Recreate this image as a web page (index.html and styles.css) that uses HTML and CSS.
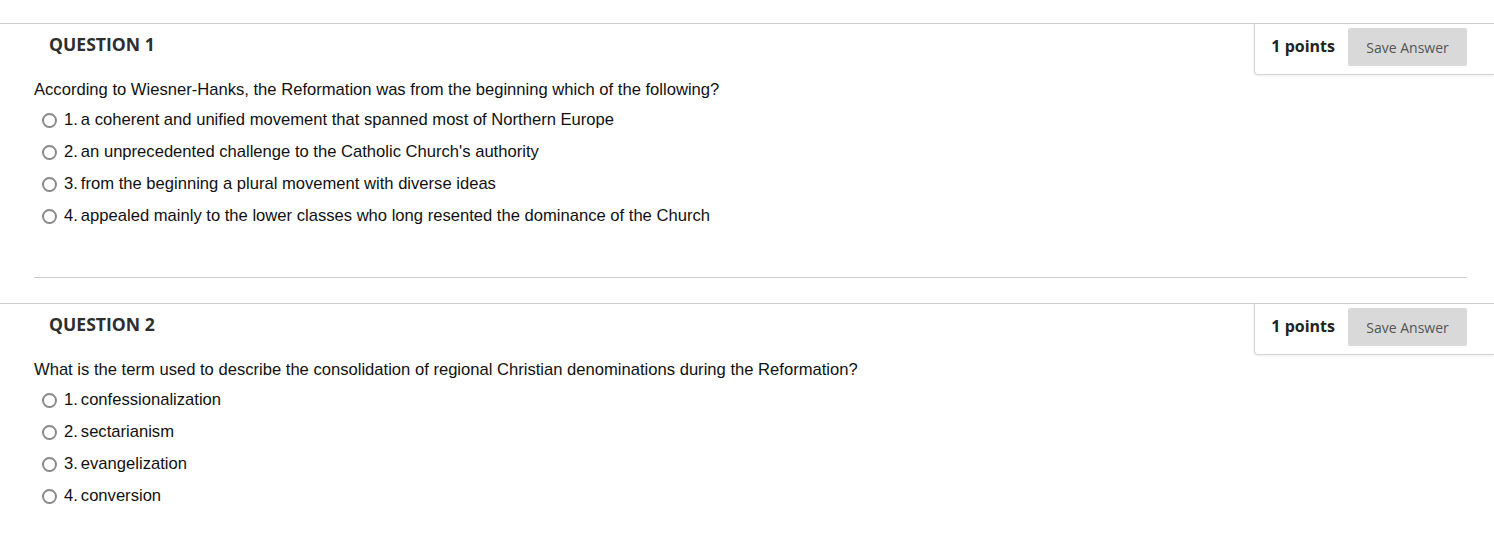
FILE: index.html
```html
<!DOCTYPE html>
<html>
<head>
<meta charset="utf-8">
<link rel="stylesheet" href="styles.css">
</head>
<body>
<div class="page">
  <section class="question">
    <div class="q-header">
      <h3 class="q-title">QUESTION 1</h3>
      <div class="points-box">
        <span class="points">1 points</span>
        <button class="save-btn">Save Answer</button>
      </div>
    </div>
    <div class="q-body">
      <p class="q-text">According to Wiesner-Hanks, the Reformation was from the beginning which of the following?</p>
      <ul class="options">
        <li class="option"><span class="radio"></span><span class="num">1.</span><span class="label">a coherent and unified movement that spanned most of Northern Europe</span></li>
        <li class="option"><span class="radio"></span><span class="num">2.</span><span class="label">an unprecedented challenge to the Catholic Church's authority</span></li>
        <li class="option"><span class="radio"></span><span class="num">3.</span><span class="label">from the beginning a plural movement with diverse ideas</span></li>
        <li class="option"><span class="radio"></span><span class="num">4.</span><span class="label">appealed mainly to the lower classes who long resented the dominance of the Church</span></li>
      </ul>
      <hr class="separator">
    </div>
  </section>
  <section class="question">
    <div class="q-header">
      <h3 class="q-title">QUESTION 2</h3>
      <div class="points-box">
        <span class="points">1 points</span>
        <button class="save-btn">Save Answer</button>
      </div>
    </div>
    <div class="q-body">
      <p class="q-text">What is the term used to describe the consolidation of regional Christian denominations during the Reformation?</p>
      <ul class="options">
        <li class="option"><span class="radio"></span><span class="num">1.</span><span class="label">confessionalization</span></li>
        <li class="option"><span class="radio"></span><span class="num">2.</span><span class="label">sectarianism</span></li>
        <li class="option"><span class="radio"></span><span class="num">3.</span><span class="label">evangelization</span></li>
        <li class="option"><span class="radio"></span><span class="num">4.</span><span class="label">conversion</span></li>
      </ul>
    </div>
  </section>
</div>
</body>
</html>
```

FILE: styles.css
```css
html, body {
  margin: 0;
  padding: 0;
  background: #fff;
}

.page {
  padding-top: 23px;
  font-family: "Liberation Sans", Arial, sans-serif;
  color: #111;
}

.question {
  border-top: 1px solid #cdcdcd;
  margin-bottom: 25px;
}

.q-header {
  display: flex;
  justify-content: space-between;
  align-items: flex-start;
}

.q-title {
  margin: 0;
  padding: 8px 0 0 49px;
  font-family: "Open Sans", sans-serif;
  font-weight: 700;
  font-size: 17.6px;
  line-height: 24px;
  color: #2e2e2e;
}

.points-box {
  display: flex;
  align-items: center;
  gap: 13px;
  padding: 4px 27px 8px 16px;
  border-left: 1px solid #d4d4d4;
  border-bottom: 1px solid #d4d4d4;
  border-bottom-left-radius: 4px;
  box-shadow: 0 1px 3px rgba(0, 0, 0, 0.08);
}

.points {
  font-family: "Open Sans", sans-serif;
  font-weight: 700;
  font-size: 16px;
  color: #222;
  margin-top: -2px;
}

.save-btn {
  width: 119px;
  height: 38px;
  border: none;
  border-radius: 2px;
  background: #d9d9d9;
  color: #555;
  font-family: "Open Sans", sans-serif;
  font-size: 14px;
  padding: 0;
}

.q-body {
  padding: 0 27px 0 34px;
}

.q-text {
  margin: 6px 0 0 0;
  font-size: 16.6px;
  line-height: 18px;
}

.options {
  list-style: none;
  margin: 5px 0 0 0;
  padding: 0;
}

.option {
  display: flex;
  align-items: center;
  height: 32px;
  font-size: 16.6px;
}

.radio {
  box-sizing: border-box;
  width: 15px;
  height: 15px;
  margin-left: 8px;
  margin-right: 7px;
  border: 2px solid #8a8a8a;
  border-radius: 50%;
}

.num {
  margin-right: 3px;
}

.separator {
  border: none;
  border-top: 1px solid #cdcdcd;
  margin: 45px 0 0 0;
}
```
